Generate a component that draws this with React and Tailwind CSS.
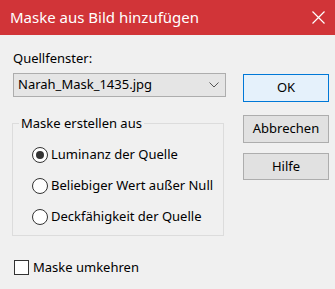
import React from "react"

const font = { fontFamily: '"Noto Sans", "Open Sans", sans-serif' }

const Radio = ({ checked, label }) => (
  <div className="flex items-center h-[31px]">
    <span className="w-[16px] h-[16px] rounded-full border border-[#333333] bg-white flex items-center justify-center">
      {checked && <span className="w-[8px] h-[8px] rounded-full bg-[#333333]" />}
    </span>
    <span className="ml-[3px]">{label}</span>
  </div>
)

const Button = ({ children, primary, className = "" }) => (
  <div
    className={
      "w-[86px] flex items-center justify-center border " +
      (primary ? "bg-[#e5f1fb] border-[#0078d7]" : "bg-[#e1e1e1] border-[#adadad]") +
      " " +
      className
    }
  >
    {children}
  </div>
)

export default function App() {
  return (
    <div className="w-[335px] h-[289px] bg-[#f0f0f0] text-black text-[13px] overflow-hidden" style={font}>
      <div className="h-[35px] bg-[#d13438] flex items-center justify-between pl-[10px] pr-[10px] text-white">
        <span className="text-[15px]">Maske aus Bild hinzufügen</span>
        <svg width="13" height="13" viewBox="0 0 13 13">
          <path d="M0.5 0.5 L12.5 12.5 M12.5 0.5 L0.5 12.5" stroke="white" strokeWidth="1.2" />
        </svg>
      </div>

      <div className="flex">
        <div className="ml-[13px] w-[213px] pt-[14px]">
          <div className="h-[18px] leading-[18px]">Quellfenster:</div>
          <div className="mt-[6px] h-[24px] bg-[#e5e5e5] border border-[#adadad] flex items-center justify-between pl-[4px] pr-[6px]">
            <span>Narah_Mask_1435.jpg</span>
            <svg width="10" height="6" viewBox="0 0 10 6">
              <path d="M0.5 0.5 L5 5 L9.5 0.5" fill="none" stroke="#555555" strokeWidth="1" />
            </svg>
          </div>

          <fieldset className="mt-[17px] -ml-[1px] w-[212px] border border-[#dcdcdc] pl-[6px] pt-[7px] pb-[3px]">
            <legend className="px-[2px] h-[18px] leading-[18px]">Maske erstellen aus</legend>
            <div className="pl-[13px]">
              <Radio checked label="Luminanz der Quelle" />
              <Radio label="Beliebiger Wert außer Null" />
              <Radio label="Deckfähigkeit der Quelle" />
            </div>
          </fieldset>

          <div className="mt-[22px] ml-[1px] flex items-center">
            <span className="w-[15px] h-[15px] border border-[#333333] bg-white" />
            <span className="ml-[4px]">Maske umkehren</span>
          </div>
        </div>

        <div className="ml-[17px] pt-[39px] flex flex-col">
          <Button primary className="h-[28px]">OK</Button>
          <Button className="h-[28px] mt-[13px]">Abbrechen</Button>
          <Button className="h-[27px] mt-[10px]">Hilfe</Button>
        </div>
      </div>
    </div>
  )
}
